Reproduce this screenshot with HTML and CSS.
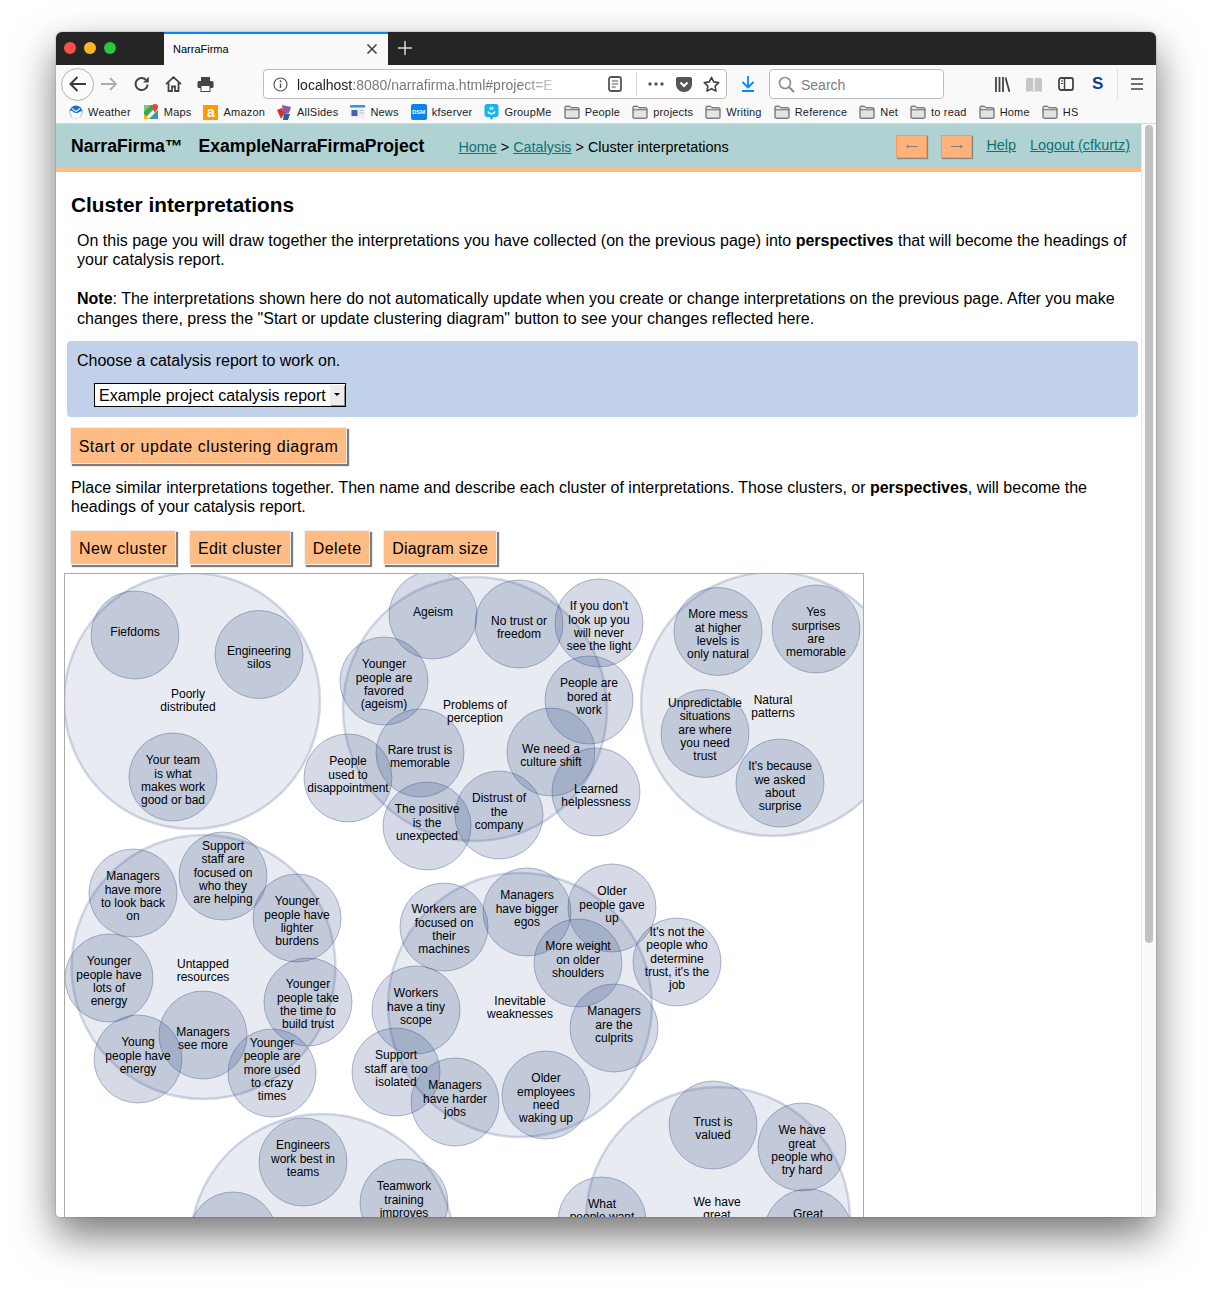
FILE: index.html
```html
<!DOCTYPE html>
<html lang="en">
<head>
<meta charset="utf-8">
<title>NarraFirma</title>
<link rel="stylesheet" href="styles.css">
</head>
<body>
<svg class="defs" width="0" height="0" aria-hidden="true">
  <symbol id="folder" viewBox="0 0 16 14">
    <path d="M1 12.5V2.2c0-.6.4-1 1-1h3.6l1.4 1.6h7c.6 0 1 .4 1 1v8.700c0 .4-.3.700-.7.700H1.700c-.4 0-.7-.3-.7-.7z" fill="#e4e4e4" stroke="#4a4a4a" stroke-width="1"/>
    <path d="M1 4.800h14" stroke="#6a6a6a" stroke-width="1"/>
  </symbol>
</svg>
<div class="window">
  <div class="tabbar">
    <div class="lights">
      <span class="light red"></span><span class="light yellow"></span><span class="light green"></span>
    </div>
    <div class="tab">
      <span class="tab-title">NarraFirma</span>
      <svg class="tab-close" width="12" height="12" viewBox="0 0 12 12"><path d="M1.500 1.500l9 9M10.500 1.500l-9 9" stroke="#3c3c3c" stroke-width="1.500"/></svg>
    </div>
    <svg class="tab-new" width="14" height="14" viewBox="0 0 14 14"><path d="M7 0v14M0 7h14" stroke="#d8d8d8" stroke-width="1.500"/></svg>
  </div>

  <div class="toolbar">
    <div class="back">
      <svg width="20" height="18" viewBox="0 0 20 18"><path d="M18 9H3M9.500 2L2.500 9l7 7" fill="none" stroke="#3a3a3a" stroke-width="2"/></svg>
    </div>
    <svg class="tool forward" width="18" height="16" viewBox="0 0 18 16"><path d="M1 8h15M10 2l6 6-6 6" fill="none" stroke="#acacac" stroke-width="1.800"/></svg>
    <svg class="tool reload" width="16" height="16" viewBox="0 0 16 16"><path d="M13.600 8.500a6 6 0 1 1-1.700-4.700" fill="none" stroke="#444" stroke-width="2"/><path d="M14.800 0.800v5.800H9z" fill="#444"/></svg>
    <svg class="tool home" width="17" height="16" viewBox="0 0 17 16"><path d="M1 8.200L8.500 1.200 16 8.200M3.500 6.500V15h3.500v-4.500h3V15h3.500V6.500" fill="none" stroke="#444" stroke-width="1.800"/></svg>
    <svg class="tool print" width="17" height="16" viewBox="0 0 17 16"><path d="M4 5V1h9v4z" fill="#444"/><rect x="0.500" y="5" width="16" height="7" rx="1.500" fill="#444"/><rect x="4" y="9.500" width="9" height="6" fill="#fff" stroke="#444"/></svg>

    <div class="urlbar">
      <svg class="info" width="15" height="15" viewBox="0 0 15 15"><circle cx="7.500" cy="7.500" r="6.500" fill="none" stroke="#555" stroke-width="1.200"/><path d="M7.500 6.500v4.500" stroke="#555" stroke-width="1.400"/><circle cx="7.500" cy="4.300" r="1" fill="#555"/></svg>
      <span class="url"><span class="host">localhost</span>:8080/narrafirma.html#project=E</span>
      <svg class="reader" width="14" height="16" viewBox="0 0 14 16"><rect x="1" y="1" width="12" height="14" rx="2" fill="none" stroke="#555" stroke-width="1.800"/><path d="M3.800 5h6.400M3.800 8h6.400M3.800 11h4" stroke="#555" stroke-width="1.200"/></svg>
      <span class="url-divider"></span>
      <svg class="dots" width="16" height="4" viewBox="0 0 16 4"><circle cx="2" cy="2" r="1.700" fill="#555"/><circle cx="8" cy="2" r="1.700" fill="#555"/><circle cx="14" cy="2" r="1.700" fill="#555"/></svg>
      <svg class="pocket" width="16" height="15" viewBox="0 0 16 15"><path d="M0 2c0-1 .7-2 2-2h12c1.300 0 2 1 2 2v5c0 4.500-3.500 8-8 8s-8-3.500-8-8z" fill="#555"/><path d="M4.500 5.500L8 9l3.500-3.500" fill="none" stroke="#fff" stroke-width="2"/></svg>
      <svg class="star" width="17" height="16" viewBox="0 0 17 16"><path d="M8.500 1.300l2.200 4.600 5 .7-3.600 3.500.9 5-4.500-2.400-4.500 2.400.9-5L1.300 6.600l5-.7z" fill="none" stroke="#444" stroke-width="1.600" stroke-linejoin="round"/></svg>
    </div>

    <svg class="download" width="14" height="16" viewBox="0 0 14 16"><path d="M7 0v11M1.500 6L7 11.500 12.500 6" fill="none" stroke="#0a84ff" stroke-width="1.800"/><path d="M1 15h12" stroke="#0a84ff" stroke-width="2"/></svg>

    <div class="searchbar">
      <svg width="17" height="17" viewBox="0 0 17 17"><circle cx="7" cy="7" r="5.500" fill="none" stroke="#8a8a8a" stroke-width="1.600"/><path d="M11 11l5 5" stroke="#8a8a8a" stroke-width="2"/></svg>
      <span class="search-text">Search</span>
    </div>

    <svg class="library" width="15" height="15" viewBox="0 0 15 15"><path d="M1 0v15M4.500 0v15M8 0v15" stroke="#444" stroke-width="1.800"/><path d="M10.500 0.500l4 14.500" stroke="#444" stroke-width="1.800"/></svg>
    <svg class="reading" width="16" height="15" viewBox="0 0 16 15"><path d="M0 1.500c2.300-1 5-1 7.300 0V15c-2.300-1-5-1-7.300 0zM8.700 1.500c2.300-1 5-1 7.300 0V15c-2.300-1-5-1-7.300 0z" fill="#c6c6c6"/></svg>
    <svg class="sidebar" width="16" height="14" viewBox="0 0 16 14"><rect x="1" y="1" width="14" height="12" rx="2" fill="none" stroke="#444" stroke-width="1.800"/><path d="M6.500 1v12" stroke="#444" stroke-width="1.500"/><path d="M3 4h2M3 6.500h2" stroke="#444"/></svg>
    <span class="sync">S</span>
    <span class="tool-divider"></span>
    <svg class="menu" width="12" height="12" viewBox="0 0 12 12"><path d="M0 1h12M0 6h12M0 11h12" stroke="#444" stroke-width="1.600"/></svg>
  </div>

  <div class="bookmarks">
    <span class="bm"><svg width="14" height="14" viewBox="0 0 14 14"><circle cx="7" cy="7" r="6.500" fill="#1a73c8"/><path d="M.8 6c2.500-.8 4 2.200 6.200 2.200S11 6.500 13.200 6C13 10 10.500 13.500 7 13.500S1 10 .8 6z" fill="#fff"/><path d="M3 3.500l4 3 4-3" fill="none" stroke="#bfe0ff" stroke-width="1.500"/></svg>Weather</span>
    <span class="bm"><svg width="16" height="16" viewBox="0 0 14 16"><rect y="1" width="14" height="14" fill="#35a853"/><path d="M0 15L14 1v5L5 15z" fill="#f2f2f2"/><path d="M7 15l7-6v6z" fill="#4285f4"/><path d="M0 1h7L0 8z" fill="#7cc576"/><path d="M0 15V10l5 5z" fill="#fbbc05"/><path d="M11 0c1.800 0 3 1.300 3 3 0 2-2 3.500-3 6-1-2.500-3-4-3-6 0-1.700 1.200-3 3-3z" fill="#e5483b"/></svg>Maps</span>
    <span class="bm"><span class="amazon">a</span>Amazon</span>
    <span class="bm"><svg width="15" height="15" viewBox="0 0 15 15"><path d="M5 0l9 2-2 6H6z" fill="#8c5a9e"/><path d="M0 5l5-2 2 6-3 5z" fill="#d0332e"/><path d="M7 8l6 1-2 6H6z" fill="#2c5c9f"/></svg>AllSides</span>
    <span class="bm"><svg width="15" height="14" viewBox="0 0 15 14"><rect width="15" height="13" fill="#eef0f5"/><rect width="15" height="2.500" fill="#3b8fe0"/><rect x="1.500" y="5" width="6" height="6" fill="#4a5fb0"/><path d="M9.500 5.500h4M9.500 8h4" stroke="#b8bcc8"/></svg>News</span>
    <span class="bm"><span class="dsm">DSM</span>kfserver</span>
    <span class="bm"><svg width="15" height="16" viewBox="0 0 14 16"><path d="M2.500 0h9C13 0 14 1 14 2.500v8c0 1.500-1 2.500-2.500 2.500H9l-2 3-2-3H2.500C1 13 0 12 0 10.500v-8C0 1 1 0 2.500 0z" fill="#14b5ee"/><path d="M3.500 7.500c1 3 6 3 7 0" fill="none" stroke="#fff" stroke-width="1.300"/><path d="M6 2.800v3M8 2.800v3M5 3.800h4M5 4.900h4" stroke="#fff" stroke-width=".7"/></svg>GroupMe</span>
    <span class="bm"><svg width="16" height="14"><use href="#folder"/></svg>People</span>
    <span class="bm"><svg width="16" height="14"><use href="#folder"/></svg>projects</span>
    <span class="bm"><svg width="16" height="14"><use href="#folder"/></svg>Writing</span>
    <span class="bm"><svg width="16" height="14"><use href="#folder"/></svg>Reference</span>
    <span class="bm"><svg width="16" height="14"><use href="#folder"/></svg>Net</span>
    <span class="bm"><svg width="16" height="14"><use href="#folder"/></svg>to read</span>
    <span class="bm"><svg width="16" height="14"><use href="#folder"/></svg>Home</span>
    <span class="bm"><svg width="16" height="14"><use href="#folder"/></svg>HS</span>
  </div>

  <div class="viewport">
    <main class="main">
      <header class="pagehead">
        <span class="brand">NarraFirma™</span>
        <span class="project">ExampleNarraFirmaProject</span>
        <nav class="crumbs"><a href="#">Home</a> &gt; <a href="#">Catalysis</a> &gt; Cluster interpretations</nav>
        <button class="navbtn navprev" type="button"><svg width="14" height="5" viewBox="0 0 14 5"><path d="M13 2.500H3" stroke="#8a8272" stroke-width="1.100"/><path d="M3.500 .5L.8 2.500 3.500 4.500z" fill="#8a8272"/></svg></button>
        <button class="navbtn navnext" type="button"><svg width="14" height="5" viewBox="0 0 14 5"><path d="M1 2.500h10" stroke="#8a8272" stroke-width="1.100"/><path d="M10.500 .5l2.700 2-2.700 2z" fill="#8a8272"/></svg></button>
        <a class="toplink help" href="#">Help</a>
        <a class="toplink logout" href="#">Logout (cfkurtz)</a>
      </header>

      <h1 class="title">Cluster interpretations</h1>
      <p class="intro">On this page you will draw together the interpretations you have collected (on the previous page) into <b>perspectives</b> that will become the headings of your catalysis report.</p>
      <p class="intro"><b>Note</b>: The interpretations shown here do not automatically update when you create or change interpretations on the previous page. After you make changes there, press the "Start or update clustering diagram" button to see your changes reflected here.</p>

      <section class="panel">
        <div class="panel-label">Choose a catalysis report to work on.</div>
        <div class="select"><span class="select-text">Example project catalysis report</span><span class="select-arrow"></span></div>
      </section>

      <button class="btn btn-start" type="button">Start or update clustering diagram</button>
      <p class="place">Place similar interpretations together. Then name and describe each cluster of interpretations. Those clusters, or <b>perspectives</b>, will become the headings of your catalysis report.</p>
      <div class="btnrow">
        <button class="btn" type="button">New cluster</button>
        <button class="btn" type="button">Edit cluster</button>
        <button class="btn" type="button">Delete</button>
        <button class="btn btn-size" type="button">Diagram size</button>
      </div>

      <div class="diagram">
        <svg class="canvas" width="798" height="650" viewBox="65 574 798 650">
          <g class="big">
            <circle cx="192" cy="701" r="128"/>
            <circle cx="475" cy="709" r="132"/>
            <circle cx="773" cy="704" r="132"/>
            <circle cx="203.500" cy="967" r="132"/>
            <circle cx="520" cy="1005" r="132"/>
            <circle cx="322" cy="1246" r="132"/>
            <circle cx="718" cy="1219" r="132"/>
          </g>
          <g class="small">
            <circle cx="135" cy="635" r="44"/>
            <circle cx="259" cy="654.500" r="44"/>
            <circle cx="173" cy="777" r="44"/>
            <circle cx="433" cy="615" r="44"/>
            <circle cx="384" cy="681" r="44"/>
            <circle cx="519" cy="624" r="44"/>
            <circle cx="599" cy="623" r="44"/>
            <circle cx="589" cy="700" r="44"/>
            <circle cx="596" cy="792" r="44"/>
            <circle cx="551" cy="752" r="44"/>
            <circle cx="348" cy="778" r="44"/>
            <circle cx="420" cy="753" r="44"/>
            <circle cx="427" cy="826" r="44"/>
            <circle cx="499" cy="815" r="44"/>
            <circle cx="718" cy="631.500" r="44"/>
            <circle cx="816" cy="629" r="44"/>
            <circle cx="705" cy="733.500" r="44"/>
            <circle cx="780" cy="783" r="44"/>
            <circle cx="133" cy="893" r="44"/>
            <circle cx="223" cy="876" r="44"/>
            <circle cx="297" cy="918" r="44"/>
            <circle cx="109" cy="978" r="44"/>
            <circle cx="308" cy="1002" r="44"/>
            <circle cx="138" cy="1059" r="44"/>
            <circle cx="203" cy="1035" r="44"/>
            <circle cx="272" cy="1073" r="44"/>
            <circle cx="444" cy="927" r="44"/>
            <circle cx="527" cy="912" r="44"/>
            <circle cx="612" cy="908" r="44"/>
            <circle cx="578" cy="963" r="44"/>
            <circle cx="677" cy="962" r="44"/>
            <circle cx="416" cy="1010" r="44"/>
            <circle cx="614" cy="1028" r="44"/>
            <circle cx="396" cy="1072" r="44"/>
            <circle cx="455" cy="1102" r="44"/>
            <circle cx="546" cy="1095" r="44"/>
            <circle cx="303" cy="1162" r="44"/>
            <circle cx="404" cy="1203" r="44"/>
            <circle cx="233" cy="1236" r="44"/>
            <circle cx="713" cy="1125" r="44"/>
            <circle cx="802" cy="1147" r="44"/>
            <circle cx="602" cy="1221" r="44"/>
            <circle cx="808" cy="1233" r="44"/>
          </g>
          <g class="labels">
            <text x="188" y="698">Poorly<tspan x="188" dy="13.330">distributed</tspan></text>
            <text x="475" y="709">Problems of<tspan x="475" dy="13.330">perception</tspan></text>
            <text x="773" y="704">Natural<tspan x="773" dy="13.330">patterns</tspan></text>
            <text x="203" y="968">Untapped<tspan x="203" dy="13.330">resources</tspan></text>
            <text x="520" y="1005">Inevitable<tspan x="520" dy="13.330">weaknesses</tspan></text>
            <text x="717" y="1206">We have<tspan x="717" dy="13.330">great</tspan></text>

            <text x="135" y="636">Fiefdoms</text>
            <text x="259" y="655">Engineering<tspan x="259" dy="13.330">silos</tspan></text>
            <text x="173" y="764.200">Your team<tspan x="173" dy="13.330">is what</tspan><tspan x="173" dy="13.330">makes work</tspan><tspan x="173" dy="13.330">good or bad</tspan></text>
            <text x="433" y="616">Ageism</text>
            <text x="384" y="668.200">Younger<tspan x="384" dy="13.330">people are</tspan><tspan x="384" dy="13.330">favored</tspan><tspan x="384" dy="13.330">(ageism)</tspan></text>
            <text x="519" y="625">No trust or<tspan x="519" dy="13.330">freedom</tspan></text>
            <text x="599" y="610.200">If you don't<tspan x="599" dy="13.330">look up you</tspan><tspan x="599" dy="13.330">will never</tspan><tspan x="599" dy="13.330">see the light</tspan></text>
            <text x="589" y="687.200">People are<tspan x="589" dy="13.330">bored at</tspan><tspan x="589" dy="13.330">work</tspan></text>
            <text x="596" y="793">Learned<tspan x="596" dy="13.330">helplessness</tspan></text>
            <text x="551" y="753">We need a<tspan x="551" dy="13.330">culture shift</tspan></text>
            <text x="348" y="765.200">People<tspan x="348" dy="13.330">used to</tspan><tspan x="348" dy="13.330">disappointment</tspan></text>
            <text x="420" y="754">Rare trust is<tspan x="420" dy="13.330">memorable</tspan></text>
            <text x="427" y="813.200">The positive<tspan x="427" dy="13.330">is the</tspan><tspan x="427" dy="13.330">unexpected</tspan></text>
            <text x="499" y="802.200">Distrust of<tspan x="499" dy="13.330">the</tspan><tspan x="499" dy="13.330">company</tspan></text>
            <text x="718" y="618.200">More mess<tspan x="718" dy="13.330">at higher</tspan><tspan x="718" dy="13.330">levels is</tspan><tspan x="718" dy="13.330">only natural</tspan></text>
            <text x="816" y="616.200">Yes<tspan x="816" dy="13.330">surprises</tspan><tspan x="816" dy="13.330">are</tspan><tspan x="816" dy="13.330">memorable</tspan></text>
            <text x="705" y="707">Unpredictable<tspan x="705" dy="13.330">situations</tspan><tspan x="705" dy="13.330">are where</tspan><tspan x="705" dy="13.330">you need</tspan><tspan x="705" dy="13.330">trust</tspan></text>
            <text x="780" y="770.200">It's because<tspan x="780" dy="13.330">we asked</tspan><tspan x="780" dy="13.330">about</tspan><tspan x="780" dy="13.330">surprise</tspan></text>
            <text x="133" y="880.200">Managers<tspan x="133" dy="13.330">have more</tspan><tspan x="133" dy="13.330">to look back</tspan><tspan x="133" dy="13.330">on</tspan></text>
            <text x="223" y="850">Support<tspan x="223" dy="13.330">staff are</tspan><tspan x="223" dy="13.330">focused on</tspan><tspan x="223" dy="13.330">who they</tspan><tspan x="223" dy="13.330">are helping</tspan></text>
            <text x="297" y="905.200">Younger<tspan x="297" dy="13.330">people have</tspan><tspan x="297" dy="13.330">lighter</tspan><tspan x="297" dy="13.330">burdens</tspan></text>
            <text x="109" y="965.200">Younger<tspan x="109" dy="13.330">people have</tspan><tspan x="109" dy="13.330">lots of</tspan><tspan x="109" dy="13.330">energy</tspan></text>
            <text x="308" y="988.200">Younger<tspan x="308" dy="13.330">people take</tspan><tspan x="308" dy="13.330">the time to</tspan><tspan x="308" dy="13.330">build trust</tspan></text>
            <text x="138" y="1046.200">Young<tspan x="138" dy="13.330">people have</tspan><tspan x="138" dy="13.330">energy</tspan></text>
            <text x="203" y="1036">Managers<tspan x="203" dy="13.330">see more</tspan></text>
            <text x="272" y="1047">Younger<tspan x="272" dy="13.330">people are</tspan><tspan x="272" dy="13.330">more used</tspan><tspan x="272" dy="13.330">to crazy</tspan><tspan x="272" dy="13.330">times</tspan></text>
            <text x="444" y="913.200">Workers are<tspan x="444" dy="13.330">focused on</tspan><tspan x="444" dy="13.330">their</tspan><tspan x="444" dy="13.330">machines</tspan></text>
            <text x="527" y="899.200">Managers<tspan x="527" dy="13.330">have bigger</tspan><tspan x="527" dy="13.330">egos</tspan></text>
            <text x="612" y="895.200">Older<tspan x="612" dy="13.330">people gave</tspan><tspan x="612" dy="13.330">up</tspan></text>
            <text x="578" y="950.200">More weight<tspan x="578" dy="13.330">on older</tspan><tspan x="578" dy="13.330">shoulders</tspan></text>
            <text x="677" y="936">It's not the<tspan x="677" dy="13.330">people who</tspan><tspan x="677" dy="13.330">determine</tspan><tspan x="677" dy="13.330">trust, it's the</tspan><tspan x="677" dy="13.330">job</tspan></text>
            <text x="416" y="997.200">Workers<tspan x="416" dy="13.330">have a tiny</tspan><tspan x="416" dy="13.330">scope</tspan></text>
            <text x="614" y="1015.200">Managers<tspan x="614" dy="13.330">are the</tspan><tspan x="614" dy="13.330">culprits</tspan></text>
            <text x="396" y="1059.200">Support<tspan x="396" dy="13.330">staff are too</tspan><tspan x="396" dy="13.330">isolated</tspan></text>
            <text x="455" y="1089.200">Managers<tspan x="455" dy="13.330">have harder</tspan><tspan x="455" dy="13.330">jobs</tspan></text>
            <text x="546" y="1082.200">Older<tspan x="546" dy="13.330">employees</tspan><tspan x="546" dy="13.330">need</tspan><tspan x="546" dy="13.330">waking up</tspan></text>
            <text x="303" y="1149.200">Engineers<tspan x="303" dy="13.330">work best in</tspan><tspan x="303" dy="13.330">teams</tspan></text>
            <text x="404" y="1190.200">Teamwork<tspan x="404" dy="13.330">training</tspan><tspan x="404" dy="13.330">improves</tspan></text>
            <text x="713" y="1126">Trust is<tspan x="713" dy="13.330">valued</tspan></text>
            <text x="802" y="1134.200">We have<tspan x="802" dy="13.330">great</tspan><tspan x="802" dy="13.330">people who</tspan><tspan x="802" dy="13.330">try hard</tspan></text>
            <text x="602" y="1208">What<tspan x="602" dy="13.330">people want</tspan></text>
            <text x="808" y="1218">Great</text>
          </g>
        </svg>
      </div>
    </main>
    <div class="scrollbar"><span class="thumb"></span></div>
  </div>
</div>
</body>
</html>
```
FILE: styles.css
```css
* { box-sizing: border-box; }
html, body { margin: 0; height: 1297px; overflow: hidden; background: #fff; }
body { font-family: "Liberation Sans", Arial, sans-serif; color: #000; }
.defs { position: absolute; }

.window {
  width: 1100px; height: 1185px; margin: 32px 56px 0;
  display: flex; flex-direction: column;
  border-radius: 6px 6px 4px 4px; overflow: hidden;
  box-shadow: 0 18px 42px rgba(0,0,0,.55), 0 0 2px rgba(0,0,0,.35);
  background: #fff;
}

/* title bar */
.tabbar { height: 33px; flex: none; background: #252525; display: flex; align-items: center; }
.lights { width: 108px; padding: 0 0 1px 8px; display: flex; gap: 8px; }
.light { width: 12px; height: 12px; border-radius: 50%; }
.red { background: #fc4f4b; }
.yellow { background: #fdb524; }
.green { background: #28c73f; }
.tab {
  width: 224px; height: 33px; background: #f9f9fa; border-top: 2px solid #0a84ff;
  display: flex; align-items: center; justify-content: space-between;
  padding: 0 10px 2px 9px; font-size: 11px;
}
.tab-new { margin: 0 0 2px 10px; }

/* toolbar */
.toolbar { height: 36px; flex: none; background: #f9f9fa; display: flex; align-items: center; padding: 2px 0 0 5px; }
.back {
  width: 33px; height: 33px; border: 1px solid #b0b0b0; border-radius: 50%; background: #fbfbfb;
  display: flex; align-items: center; justify-content: center;
}
.forward { margin-left: 6px; }
.reload { margin-left: 16px; }
.home { margin-left: 15px; }
.print { margin-left: 15px; }
.urlbar {
  width: 464px; height: 30px; margin-left: 49px; background: #fff;
  border: 1px solid #bdbdbd; border-radius: 4px;
  display: flex; align-items: center; padding-left: 9px;
}
.url {
  width: 273px; margin-left: 9px; padding-top: 2px; font-size: 14px; color: #7a7a7a; white-space: nowrap; overflow: hidden;
  -webkit-mask-image: linear-gradient(90deg, #000 82%, transparent);
  mask-image: linear-gradient(90deg, #000 82%, transparent);
}
.host { color: #222; }
.reader { margin-left: 38px; }
.url-divider { width: 1px; height: 24px; background: #d6d6d6; margin-left: 14px; }
.dots { margin-left: 11px; }
.pocket { margin-left: 12px; }
.star { margin-left: 11px; }
.download { margin-left: 14px; }
.searchbar {
  width: 175px; height: 30px; margin-left: 14px; background: #fff;
  border: 1px solid #bdbdbd; border-radius: 4px;
  display: flex; align-items: center; gap: 6px; padding-left: 8px;
  font-size: 14px; color: #7c7c7c;
}
.search-text { padding-top: 2px; }
.library { margin-left: 51px; }
.reading { margin-left: 16px; }
.sidebar { margin-left: 16px; }
.sync { margin-left: 18px; width: 11px; font-size: 17px; font-weight: bold; color: #0b3f92; }
.tool-divider { width: 1px; height: 30px; background: #e2e2e2; margin-left: 14px; }
.menu { margin-left: 13px; }

/* bookmarks */
.bookmarks {
  height: 23px; flex: none; background: #f9f9fa; border-bottom: 1px solid #d9d9d9;
  display: flex; align-items: center; gap: 12px; padding-left: 13px;
  font-size: 11px; color: #1c1c1c; letter-spacing: .2px; white-space: nowrap;
}
.bm { display: flex; align-items: center; gap: 5px; }
.amazon {
  width: 15px; height: 15px; background: #ff9a00; color: #fff; font-size: 14px; font-weight: bold;
  display: flex; align-items: center; justify-content: center; line-height: 1;
}
.dsm {
  width: 16px; height: 16px; border-radius: 2px; background: #0a84e8; color: #fff;
  font-size: 6px; font-weight: bold; letter-spacing: 0; line-height: 16px; text-align: center;
}

/* page area */
.viewport { flex: 1; min-height: 0; display: flex; }
.main { flex: 1; min-width: 0; overflow: hidden; font-size: 16px; }
.scrollbar { width: 15px; flex: none; background: #fafafa; border-left: 1px solid #e6e6e6; padding: 1px 3px 0; }
.thumb { display: block; width: 8px; height: 818px; background: #c1c1c1; border-radius: 4px; }

.pagehead {
  height: 48px; background: #b0d2d2; border-bottom: 4px solid #ffbc85;
  display: flex; align-items: center; padding-left: 15px; white-space: nowrap;
}
.brand, .project { font-size: 17.600px; font-weight: bold; }
.project { margin-left: 16px; }
.crumbs { margin-left: 34px; font-size: 14.400px; padding-top: 2px; width: 438px; }
.crumbs a, .toplink { color: #0b7575; }
.toplink { font-size: 14.400px; margin-left: 14px; margin-bottom: 2px; }
.navbtn {
  width: 31px; height: 23px; padding: 0; background: #ffb37a; border: 1px solid #f59a5a;
  box-shadow: 1px 1px 1px #888; display: flex; align-items: center; justify-content: center;
}
.navnext { margin-left: 14px; }

.title { margin: 21px 0 14px 15px; font-size: 20.800px; line-height: 24px; font-weight: bold; }
.intro { margin: 0 11px 12.300px 21px; padding-top: .4px; line-height: 19.500px; }
.title + .intro { margin-bottom: 19.900px; padding-top: 0; line-height: 19px; }

.panel { margin: 0 3px 0 11px; height: 76px; padding: 10px 10px 0; background: #c2d1ea; border-radius: 4px; }
.panel-label { line-height: 19px; }
.select {
  margin: 13px 0 0 17px; width: 252px; height: 24px; background: #fff; border: 1px solid #000;
  display: flex; align-items: center; justify-content: space-between; padding: 0 1px 0 4px;
}
.select-text { line-height: 22px; padding-top: 2px; }
.select-arrow {
  width: 14px; height: 20px; background: #ececec; box-shadow: 1px 1px 0 #8a8a8a;
  display: flex; align-items: center; justify-content: center;
}
.select-arrow::after {
  content: ""; width: 0; height: 0;
  border-left: 3px solid transparent; border-right: 3px solid transparent; border-top: 3px solid #000;
}

.btn {
  height: 35px; padding: 3px 7.500px 0 8px; margin: 0;
  font-family: inherit; font-size: 16px; letter-spacing: .42px; color: #000; white-space: nowrap;
  background: #ffbc85; border: 0;
  box-shadow: 0 0 0 1px #efefef, 2px 2px 1px 1px #7d7d7d;
}
.btn-start { display: block; margin: 11px 0 0 15px; width: 275px; padding: 3px 0 0; letter-spacing: .55px; }
.btn-size { letter-spacing: .2px; }
.place { margin: 15px 11px 14px 15px; line-height: 19.500px; }
.btnrow { display: flex; gap: 15.200px; margin-left: 15px; height: 33px; }
.btnrow .btn { height: 33px; }

.diagram { margin: 9px 0 0 8px; width: 800px; border: 1px solid #aaa; border-bottom: 0; height: 660px; }
.canvas { display: block; }
.big circle { fill: rgb(47,69,132); fill-opacity: .11; stroke: rgb(47,69,132); stroke-opacity: .2; stroke-width: 2.500; }
.small circle { fill: rgb(47,69,132); fill-opacity: .2; stroke: rgb(47,69,132); stroke-opacity: .36; stroke-width: 1; }
.labels text { font-family: "Liberation Sans", Arial, sans-serif; font-size: 12px; text-anchor: middle; fill: #000; }
```
